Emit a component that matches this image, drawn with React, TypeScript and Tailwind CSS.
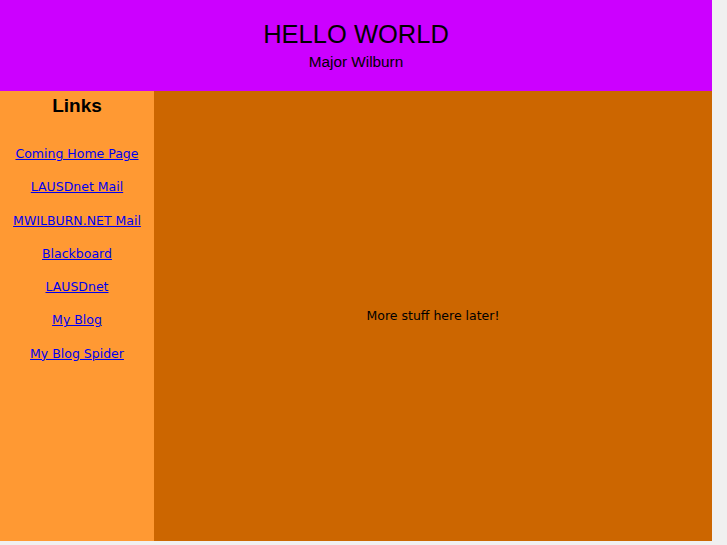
import React from "react";

const links = [
  "Coming Home Page",
  "LAUSDnet Mail",
  "MWILBURN.NET Mail",
  "Blackboard",
  "LAUSDnet",
  "My Blog",
  "My Blog Spider",
];

export default function App() {
  return (
    <div className="w-[727px] h-[545px] bg-[#f0f0f0]">
      <div className="w-[712px] h-[541px] flex flex-col">
        {/* header */}
        <div className="h-[91px] bg-[#cc00ff] flex flex-col items-center pt-[19px] font-['Liberation_Sans',sans-serif] text-black">
          <h1 className="text-[25.5px] leading-[30px]">HELLO WORLD</h1>
          <p className="text-[15.3px] leading-[18px] mt-[4px]">Major Wilburn</p>
        </div>

        <div className="flex flex-1">
          {/* sidebar */}
          <div className="w-[154px] bg-[#ff9933] flex flex-col items-center pt-[4px]">
            <h2 className="font-['Liberation_Sans',sans-serif] font-bold text-[19px] leading-[22px] text-black">
              Links
            </h2>
            <ul className="mt-[29px] flex flex-col items-center gap-[17.3px] font-['DejaVu_Sans',sans-serif] text-[12.5px] leading-[16px]">
              {links.map((l) => (
                <li key={l}>
                  <a href="#" className="text-[#0000ee] underline">
                    {l}
                  </a>
                </li>
              ))}
            </ul>
          </div>

          {/* main */}
          <div className="flex-1 bg-[#cc6600] flex items-center justify-center">
            <p className="font-['DejaVu_Sans',sans-serif] text-[12.5px] text-black">
              More stuff here later!
            </p>
          </div>
        </div>
      </div>
    </div>
  );
}
